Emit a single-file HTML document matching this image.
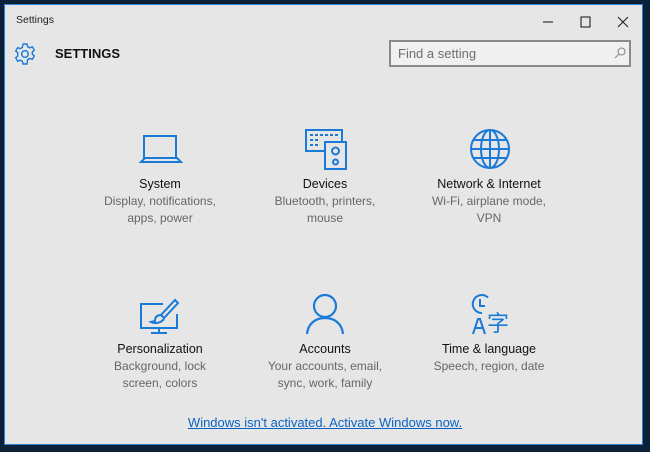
<!DOCTYPE html>
<html><head><meta charset="utf-8"><style>
html,body{margin:0;padding:0;width:650px;height:452px;overflow:hidden;background:#0c2038;font-family:"Liberation Sans","Noto Sans CJK SC",sans-serif;}
#win{position:absolute;left:4px;top:4px;width:639px;height:441px;background:#e6e6e6;border:1px solid #2f7fd6;box-sizing:border-box;}
.t{position:absolute;white-space:nowrap;}
.item{position:absolute;width:180px;text-align:center;}
.item .h{font-size:12.5px;color:#111;position:absolute;left:0;right:0;}
.item .d{font-size:12px;color:#666;line-height:16.5px;position:absolute;left:0;right:0;}
svg{position:absolute;overflow:visible}
</style></head><body>
<div id="win"></div>
<div class="t" style="left:16px;top:14px;font-size:10.5px;color:#222">Settings</div>
<svg style="left:540px;top:15px" width="95" height="14" fill="none" stroke="#222" stroke-width="1.1">
<line x1="3" y1="7" x2="13" y2="7"/><rect x="41" y="2" width="9" height="10"/><path d="M78 2L88 12M88 2L78 12"/></svg>
<svg style="left:14px;top:43px" width="22" height="22" viewBox="0 0 22 22" fill="none" stroke="#1a7ad8" stroke-width="1.4">
<path d="M9 1h4l.6 2.6 2.2 1.2 2.5-1 2 3.4-2 1.8v2.2l2 1.8-2 3.4-2.5-1-2.2 1.2L13 21H9l-.6-2.6-2.2-1.2-2.5 1-2-3.4 2-1.8V9.8l-2-1.8 2-3.4 2.5 1 2.2-1.2z"/><circle cx="11" cy="11" r="3.3"/></svg>
<div class="t" style="left:55px;top:46px;font-size:13px;font-weight:bold;color:#111">SETTINGS</div>
<div style="position:absolute;left:389px;top:40px;width:242px;height:27px;border:2px solid #8a8a8a;box-sizing:border-box;background:#f0f0f0"></div>
<div class="t" style="left:398px;top:46px;font-size:13px;color:#6d6d6d">Find a setting</div>
<svg style="left:614px;top:47px" width="12" height="12" fill="none" stroke="#888" stroke-width="1.1"><circle cx="7.5" cy="4.5" r="3.5"/><line x1="5" y1="7" x2="1" y2="11"/></svg>

<!-- System -->
<svg style="left:140px;top:135px" width="42" height="30" fill="none" stroke="#1a7ad8" stroke-width="2"><rect x="4" y="1" width="32" height="22"/><path d="M1 27h40l-4-4H5z"/></svg>
<!-- Devices -->
<svg style="left:304px;top:128px" width="44" height="44" fill="none" stroke="#1a7ad8" stroke-width="2"><path d="M20 23H2V2h36v12"/><rect x="21" y="14" width="21" height="27"/><circle cx="31.5" cy="23" r="3.5"/><circle cx="31.5" cy="34" r="2.5"/><path d="M6 7h28M6 12h10M6 17h10" stroke-dasharray="3 2"/></svg>
<!-- Network -->
<svg style="left:469px;top:128px" width="42" height="42" fill="none" stroke="#1a7ad8" stroke-width="2"><circle cx="21" cy="21" r="19"/><ellipse cx="21" cy="21" rx="9" ry="19"/><path d="M2 21h38M21 2v38M5 12h32M5 30h32"/></svg>
<!-- Personalization -->
<svg style="left:139px;top:298px" width="42" height="36" fill="none" stroke="#1a7ad8" stroke-width="2"><path d="M24 6H2v24h36V16"/><path d="M20 30v5M12 35h16"/><path d="M36 2l3 3-14 15-3-3z"/><path d="M22 17c-4 0-6 2-6 6l-4 1c4 2 10 1 13-3"/></svg>
<!-- Accounts -->
<svg style="left:305px;top:293px" width="40" height="42" fill="none" stroke="#1a7ad8" stroke-width="2.2"><circle cx="20" cy="13" r="11"/><path d="M2 41c1-10 8-16 18-16s17 6 18 16"/></svg>
<!-- Time -->
<svg style="left:468px;top:294px" width="44" height="44" fill="none" stroke="#1a7ad8" stroke-width="2"><path d="M14 19A9 9 0 1 1 20 3.5"/><path d="M12 5v7h5"/><path d="M5 40l5-15h2l5 15M7 34h8"/><text x="19" y="37" font-size="22" fill="#1a7ad8" stroke="none" font-family="Noto Sans CJK SC,sans-serif">字</text></svg>

<div class="item" style="left:70px;top:177px"><div class="h">System</div><div class="d" style="top:16px">Display, notifications,<br>apps, power</div></div>
<div class="item" style="left:235px;top:177px"><div class="h">Devices</div><div class="d" style="top:16px">Bluetooth, printers,<br>mouse</div></div>
<div class="item" style="left:399px;top:177px"><div class="h">Network &amp; Internet</div><div class="d" style="top:16px">Wi-Fi, airplane mode,<br>VPN</div></div>
<div class="item" style="left:70px;top:342px"><div class="h">Personalization</div><div class="d" style="top:16px">Background, lock<br>screen, colors</div></div>
<div class="item" style="left:235px;top:342px"><div class="h">Accounts</div><div class="d" style="top:16px">Your accounts, email,<br>sync, work, family</div></div>
<div class="item" style="left:399px;top:342px"><div class="h">Time &amp; language</div><div class="d" style="top:16px">Speech, region, date</div></div>

<div class="t" style="left:0;width:650px;text-align:center;top:415px;font-size:13px;color:#0a63c2;text-decoration:underline">Windows isn't activated. Activate Windows now.</div>
</body></html>
